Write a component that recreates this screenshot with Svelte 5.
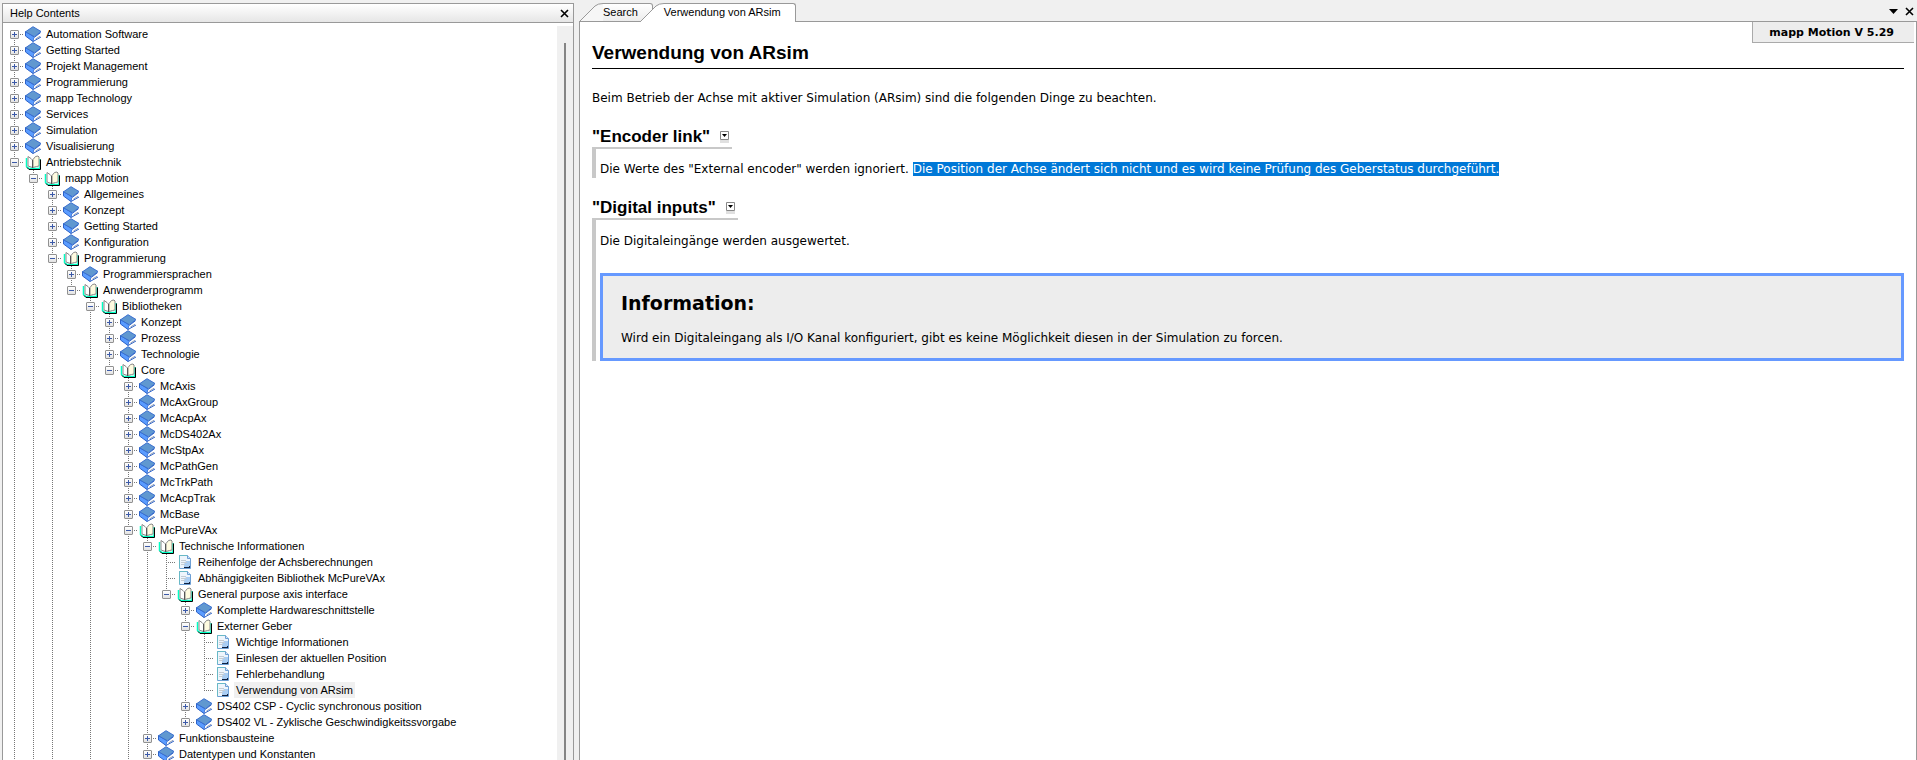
<script>
	const source = [
		[0, 'book', 'Automation Software'],
		[0, 'book', 'Getting Started'],
		[0, 'book', 'Projekt Management'],
		[0, 'book', 'Programmierung'],
		[0, 'book', 'mapp Technology'],
		[0, 'book', 'Services'],
		[0, 'book', 'Simulation'],
		[0, 'book', 'Visualisierung'],
		[0, 'open', 'Antriebstechnik'],
		[1, 'open', 'mapp Motion'],
		[2, 'book', 'Allgemeines'],
		[2, 'book', 'Konzept'],
		[2, 'book', 'Getting Started'],
		[2, 'book', 'Konfiguration'],
		[2, 'open', 'Programmierung'],
		[3, 'book', 'Programmiersprachen'],
		[3, 'open', 'Anwenderprogramm', 'last'],
		[4, 'open', 'Bibliotheken'],
		[5, 'book', 'Konzept'],
		[5, 'book', 'Prozess'],
		[5, 'book', 'Technologie'],
		[5, 'open', 'Core', 'last'],
		[6, 'book', 'McAxis'],
		[6, 'book', 'McAxGroup'],
		[6, 'book', 'McAcpAx'],
		[6, 'book', 'McDS402Ax'],
		[6, 'book', 'McStpAx'],
		[6, 'book', 'McPathGen'],
		[6, 'book', 'McTrkPath'],
		[6, 'book', 'McAcpTrak'],
		[6, 'book', 'McBase'],
		[6, 'open', 'McPureVAx'],
		[7, 'open', 'Technische Informationen'],
		[8, 'page', 'Reihenfolge der Achsberechnungen'],
		[8, 'page', 'Abhängigkeiten Bibliothek McPureVAx'],
		[8, 'open', 'General purpose axis interface', 'last'],
		[9, 'book', 'Komplette Hardwareschnittstelle'],
		[9, 'open', 'Externer Geber'],
		[10, 'page', 'Wichtige Informationen'],
		[10, 'page', 'Einlesen der aktuellen Position'],
		[10, 'page', 'Fehlerbehandlung'],
		[10, 'page', 'Verwendung von ARsim', 'last'],
		[9, 'book', 'DS402 CSP - Cyclic synchronous position'],
		[9, 'book', 'DS402 VL - Zyklische Geschwindigkeitssvorgabe', 'last'],
		[7, 'book', 'Funktionsbausteine'],
		[7, 'book', 'Datentypen und Konstanten']
	];

	// for every row, remember which parent levels still have siblings below
	const open = [];
	const rows = source.map(([depth, kind, label, end]) => {
		open[depth] = end !== 'last';
		return { depth, kind, label, last: end === 'last', guides: open.slice(0, depth) };
	});

	let selected = $state('Verwendung von ARsim');
</script>

{#snippet icon(kind)}
	{#if kind === 'book'}
		<svg class="icon" width="20" height="16" viewBox="0 0 20 16" aria-hidden="true">
			<path d="M1.500 5.500v4.500L9 15.500l1.500-4.500z" fill="#5a9cff" stroke="#2c62c8" />
			<path d="M10.500 11l6-4.500v4L9.500 15z" fill="#fff" />
			<path d="M9 15.500l8-4.500M10.500 11.200l6-4.500" fill="none" stroke="#2c62c8" />
			<path d="M11.500 13l4.500-2.700" stroke="#8f9cb4" fill="none" />
			<path d="M9 .7L17 5.500 10.500 10.800 1.500 5.800z" fill="#6098d0" stroke="#3a6fcf" />
		</svg>
	{:else if kind === 'open'}
		<svg class="icon" width="20" height="16" viewBox="0 0 20 16" aria-hidden="true">
			<path d="M2.500 4v8.500l2.500 2h11V5" fill="none" stroke="#00ffc4" stroke-width="1.500" />
			<path d="M3 13.500l2 2h11.500V5.500" fill="none" stroke="#000" />
			<path d="M4 2.500l3 2 1.500 1.500v7.500L4 12z" fill="#fff" stroke="#888" />
			<path d="M9 5.500l2.500-3 2.500-.5 1 1v9l-2.500.5-3.500 1z" fill="#fffbe0" stroke="#888" />
			<path d="M8.500 6v8" stroke="#555" />
		</svg>
	{:else}
		<svg class="icon" width="20" height="16" viewBox="0 0 20 16" aria-hidden="true">
			<path d="M3.500 1.500h8l3 3v10h-11z" fill="#eef5fc" stroke="#6d9fd4" />
			<path d="M3.500 14V1.500H11" fill="none" stroke="#68b9c6" />
			<path d="M11.500 1.500v3h3" fill="#d4e5f7" stroke="#6d9fd4" />
			<path d="M10 7h4v6H8v-3z" fill="#a9cdf3" />
			<path d="M5 6.500h5M5 8.500h6M5 10.500h4" stroke="#c4ccd4" />
			<path d="M8 13.500h5M13.500 12v2" stroke="#10213f" />
		</svg>
	{/if}
{/snippet}

<div class="window">
	<aside class="contents">
		<header class="pane-title">
			<span>Help Contents</span>
			<button class="tool" aria-label="Close contents">
				<svg width="9" height="9" viewBox="0 0 9 9"><path d="M1 1l7 7M8 1L1 8" stroke="#000" stroke-width="1.600" /></svg>
			</button>
		</header>
		<div class="pane-body">
			<ul class="tree">
				{#each rows as row, i}
					<li class="row">
						{#each row.guides as line}
							<span class="cell" class:line></span>
						{/each}
						<span class="cell line link" class:first={i === 0} class:last={row.last}>
							{#if row.kind !== 'page'}
								<button class="toggle" class:plus={row.kind === 'book'} aria-label="Toggle {row.label}"></button>
							{/if}
						</span>
						{@render icon(row.kind)}
						<button class="label" class:selected={row.label === selected} onclick={() => (selected = row.label)}>{row.label}</button>
					</li>
				{/each}
			</ul>
			<div class="scroll"><div class="thumb"></div></div>
		</div>
	</aside>

	<main class="viewer">
		<nav class="tabs">
			<button class="tab">
				<svg width="24" height="19" viewBox="0 0 24 19" aria-hidden="true">
					<path d="M0 19L16 3Q19 .5 24 .5V19z" fill="#f6f6f6" />
					<path d="M0 19L16 3Q19 .5 24 .5M0 18.500h24" fill="none" stroke="#999" />
				</svg>
				<span>Search</span>
			</button>
			<button class="tab active">
				<svg width="24" height="19" viewBox="0 0 24 19" aria-hidden="true">
					<path d="M0 19L16 3Q19 .5 24 .5V19z" fill="#fff" />
					<path d="M0 19L16 3Q19 .5 24 .5" fill="none" stroke="#999" />
				</svg>
				<span>Verwendung von ARsim</span>
			</button>
			<div class="tools">
				<button class="tool" aria-label="Tab list">
					<svg width="9" height="9" viewBox="0 0 9 9"><path d="M0 2h9L4.500 7z" /></svg>
				</button>
				<button class="tool" aria-label="Close tab">
					<svg width="9" height="9" viewBox="0 0 9 9"><path d="M1 1l7 7M8 1L1 8" stroke="#000" stroke-width="1.600" /></svg>
				</button>
			</div>
		</nav>
		<article class="page">
			<div class="version">mapp Motion V 5.29</div>
			<h1>Verwendung von ARsim</h1>
			<p class="intro">Beim Betrieb der Achse mit aktiver Simulation (ARsim) sind die folgenden Dinge zu beachten.</p>

			<section>
				<h2>"Encoder link" <button class="fold" aria-label="Collapse Encoder link"><svg width="9" height="9" viewBox="0 0 9 9"><path d="M.5 .5h8v8h-8z" fill="#fff" stroke="#888" /><path d="M2 3h5L4.500 6z" /></svg></button></h2>
				<div class="block">
					<p>Die Werte des "External encoder" werden ignoriert. <mark>Die Position der Achse ändert sich nicht und es wird keine Prüfung des Geberstatus durchgeführt.</mark></p>
				</div>
			</section>

			<section>
				<h2>"Digital inputs" <button class="fold" aria-label="Collapse Digital inputs"><svg width="9" height="9" viewBox="0 0 9 9"><path d="M.5 .5h8v8h-8z" fill="#fff" stroke="#888" /><path d="M2 3h5L4.500 6z" /></svg></button></h2>
				<div class="block">
					<p>Die Digitaleingänge werden ausgewertet.</p>
					<div class="info">
						<h3>Information:</h3>
						<p>Wird ein Digitaleingang als I/O Kanal konfiguriert, gibt es keine Möglichkeit diesen in der Simulation zu forcen.</p>
					</div>
				</div>
			</section>
		</article>
	</main>
</div>

<style>
	:global(body) {
		margin: 0;
		background: #f0f0f0;
	}
	button {
		margin: 0;
		padding: 0;
		border: 0;
		background: none;
		font: inherit;
		color: inherit;
	}
	svg {
		display: block;
		flex: none;
	}
	.window {
		display: grid;
		grid-template-columns: 572px 1fr;
		column-gap: 5px;
		height: 100vh;
		box-sizing: border-box;
		padding: 3px 0 0 2px;
		overflow: hidden;
		font: 11px/16px 'Liberation Sans', Arial, sans-serif;
		color: #000;
	}
	.contents {
		display: flex;
		flex-direction: column;
		min-height: 0;
		border: 1px solid #999;
		border-bottom: 0;
		background: #fff;
	}
	.pane-title {
		display: flex;
		align-items: center;
		justify-content: space-between;
		height: 18px;
		padding: 0 4px 0 7px;
		border-bottom: 1px solid #999;
		background: linear-gradient(#fff, #e6e6e6);
	}
	.pane-body {
		display: flex;
		flex: 1;
		min-height: 0;
	}
	.tree {
		flex: 1;
		margin: 0;
		padding: 3px 0 0 2px;
		list-style: none;
		overflow: hidden;
	}
	.row {
		display: flex;
		height: 16px;
		white-space: nowrap;
	}
	.cell {
		display: flex;
		align-items: center;
		justify-content: center;
		flex: none;
		width: 19px;
		height: 16px;
		background-repeat: no-repeat;
	}
	.line {
		background-image: repeating-linear-gradient(#777 0 1px, transparent 1px 2px);
		background-size: 1px 16px;
		background-position: 9px 0;
	}
	.link {
		background-image: repeating-linear-gradient(#777 0 1px, transparent 1px 2px), repeating-linear-gradient(90deg, #777 0 1px, transparent 1px 2px);
		background-size: 1px 16px, 10px 1px;
		background-position: 9px 0, 9px 8px;
	}
	.link.first {
		background-size: 1px 8px, 10px 1px;
		background-position: 9px 8px, 9px 8px;
	}
	.link.last {
		background-size: 1px 8px, 10px 1px;
	}
	.toggle {
		width: 9px;
		height: 9px;
		border: 1px solid #919191;
		border-radius: 1px;
		background: linear-gradient(#3c5aa8, #3c5aa8) center / 5px 1px no-repeat, linear-gradient(#fff, #e2e2e2);
	}
	.toggle.plus {
		background: linear-gradient(#3c5aa8, #3c5aa8) center / 5px 1px no-repeat, linear-gradient(#3c5aa8, #3c5aa8) center / 1px 5px no-repeat, linear-gradient(#fff, #e2e2e2);
	}
	.label {
		padding: 0 2px;
	}
	.selected {
		background: #f0f0f0;
	}
	.scroll {
		width: 16px;
		margin-top: 3px;
		padding-top: 17px;
		box-sizing: border-box;
		background: #f0f0f0;
	}
	.thumb {
		width: 2px;
		height: 100%;
		margin-left: 7px;
		background: #858585;
	}
	.viewer {
		display: flex;
		flex-direction: column;
		min-width: 0;
	}
	.tabs {
		display: flex;
		height: 19px;
		box-shadow: inset 0 -1px #999;
	}
	.tab {
		display: flex;
		height: 19px;
	}
	.tab span {
		height: 17px;
		padding-right: 14px;
		border: 1px solid #999;
		border-left: 0;
		border-radius: 0 3px 0 0;
		background: linear-gradient(#fff, #ececec);
	}
	.tab.active {
		margin-left: -13px;
		z-index: 1;
	}
	.tab.active span {
		height: 18px;
		border-bottom: 0;
		background: #fff;
	}
	.tools {
		display: flex;
		align-items: center;
		gap: 7px;
		margin-left: auto;
		padding: 0 3px 2px 0;
	}
	.page {
		flex: 1;
		padding: 0 12px;
		border: solid #999;
		border-width: 0 1px;
		background: #fff;
		font: 12px/15px Verdana, 'DejaVu Sans', sans-serif;
	}
	.version {
		float: right;
		margin-right: -10px;
		padding: 3px 20px 2px 16px;
		border: solid #aaa;
		border-width: 0 0 1px 1px;
		background: #ededed;
		font-size: 11px;
		font-weight: bold;
	}
	h1,
	h2 {
		margin: 0;
		font-family: Arial, 'Liberation Sans', sans-serif;
	}
	h1 {
		padding: 20px 0 4px;
		border-bottom: 1px solid #000;
		font-size: 19px;
		line-height: 22px;
	}
	p {
		margin: 0;
	}
	.intro {
		padding: 22px 0 21px;
	}
	h2 {
		display: flex;
		align-items: center;
		gap: 10px;
		width: max-content;
		height: 20px;
		padding-right: 3px;
		border-bottom: 2px solid #c8c8c8;
		font-size: 17px;
		line-height: 20px;
	}
	.fold {
		border-bottom: 3px solid #e0e0e0;
	}
	.block {
		padding: 13px 0 1px 4px;
		border-left: 4px solid #c8c8c8;
	}
	section + section {
		margin-top: 20px;
	}
	section + section .block {
		padding-top: 14px;
		padding-bottom: 0;
	}
	mark {
		background: #0078d7;
		color: #fff;
	}
	.info {
		margin-top: 24px;
		padding: 15px 18px 12px;
		border: 3px solid #6699ff;
		background: #ededed;
	}
	h3 {
		margin: 0 0 16px;
		font-size: 19px;
		line-height: 24px;
	}
</style>
